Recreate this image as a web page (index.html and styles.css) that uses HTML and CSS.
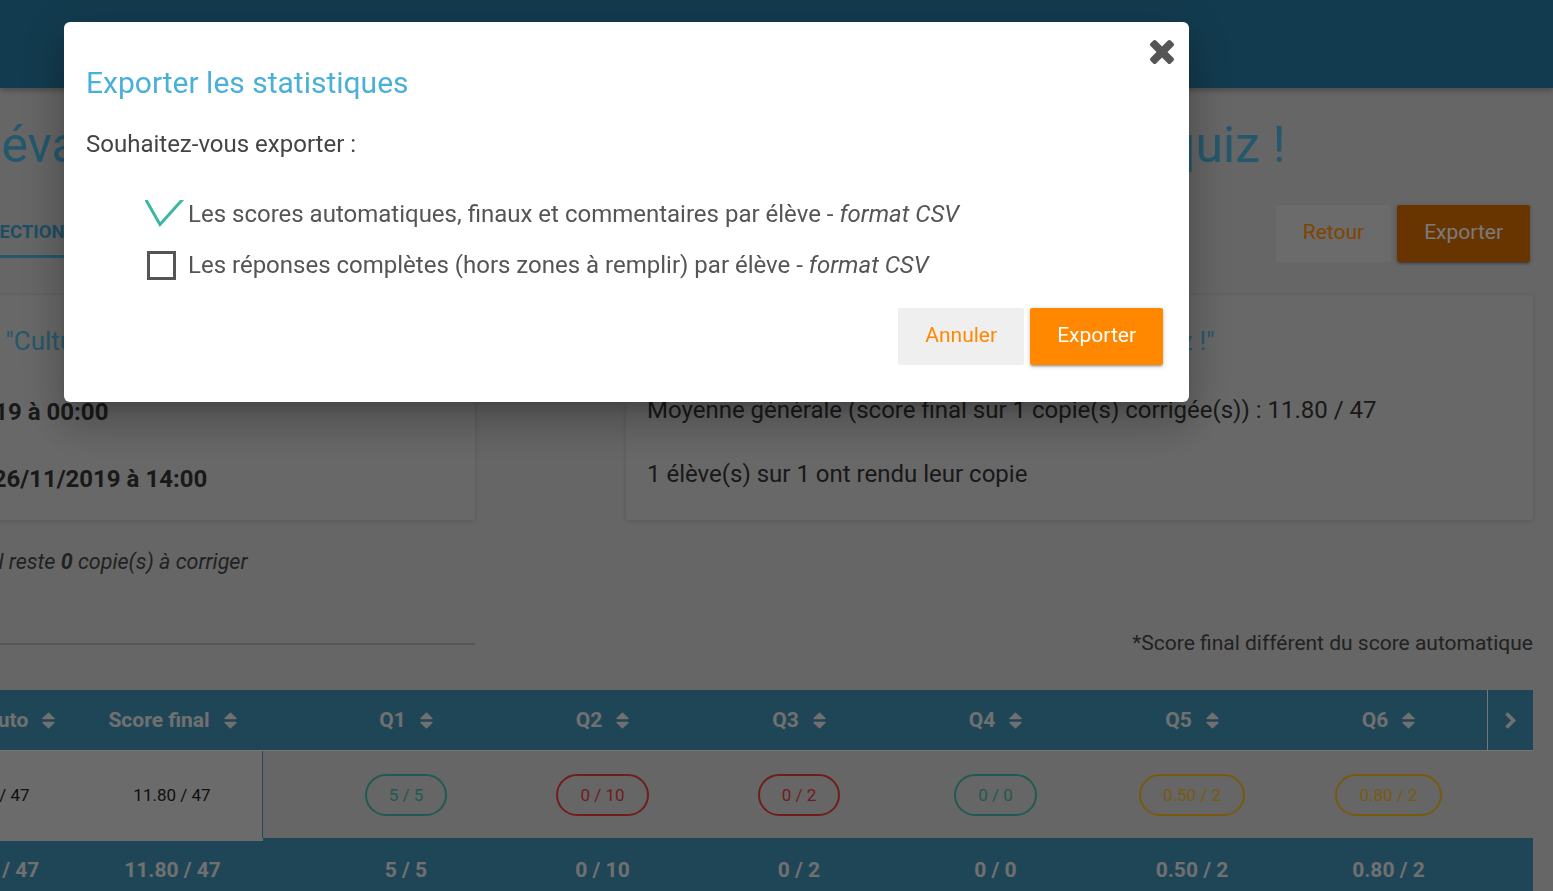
FILE: index.html
```html
<!DOCTYPE html>
<html lang="fr">
<head>
<meta charset="utf-8">
<title>Statistiques de l'évaluation</title>
<link rel="stylesheet" href="styles.css">
</head>
<body>
<header class="topbar"></header>

<main class="page">
  <h1 class="page-title">Le bilan : évaluation Culture générale et histoire : le très grand quiz !</h1>

  <div class="toolbar">
    <nav class="tabs">
      <span class="tab">Élèves</span>
      <span class="tab active">Correction</span>
    </nav>
    <div class="toolbar-actions">
      <button class="btn btn-light">Retour</button>
      <button class="btn btn-orange-dark">Exporter</button>
    </div>
  </div>

  <section class="summary">
    <div class="card card-info">
      <h2 class="card-title">Titre du devoir : "Culture générale : le grand quiz !"</h2>
      <p class="date-line">Début: <b>26/11/2019 à 00:00</b></p>
      <p class="date-line">Fin des rendus : <b>26/11/2019 à 14:00</b></p>
    </div>
    <div class="card card-stats">
      <h2 class="card-title">Statistiques de "Culture générale : le grand quiz !"</h2>
      <p class="stat-line">Moyenne générale (score final sur 1 copie(s) corrigée(s)) : 11.80 / 47</p>
      <p class="stat-line">1 élève(s) sur 1 ont rendu leur copie</p>
    </div>
    <div class="remaining">
      <p class="remaining-text">1 copie(s) rendue(s). Il reste <b>0</b> copie(s) à corriger</p>
      <hr class="divider">
    </div>
    <p class="note">*Score final différent du score automatique</p>
  </section>

  <div class="scores">
    <div class="row head">
      <div class="cell">Élève <svg class="sort" viewBox="0 0 13 17"><path d="M6.5 1.2 L12 6.6 H1 Z M1 10.4 H12 L6.5 15.8 Z"/></svg></div>
      <div class="cell">Score auto <svg class="sort" viewBox="0 0 13 17"><path d="M6.5 1.2 L12 6.6 H1 Z M1 10.4 H12 L6.5 15.8 Z"/></svg></div>
      <div class="cell">Score final <svg class="sort" viewBox="0 0 13 17"><path d="M6.5 1.2 L12 6.6 H1 Z M1 10.4 H12 L6.5 15.8 Z"/></svg></div>
      <div class="cell"></div>
      <div class="cell">Q1 <svg class="sort" viewBox="0 0 13 17"><path d="M6.5 1.2 L12 6.6 H1 Z M1 10.4 H12 L6.5 15.8 Z"/></svg></div>
      <div class="cell">Q2 <svg class="sort" viewBox="0 0 13 17"><path d="M6.5 1.2 L12 6.6 H1 Z M1 10.4 H12 L6.5 15.8 Z"/></svg></div>
      <div class="cell">Q3 <svg class="sort" viewBox="0 0 13 17"><path d="M6.5 1.2 L12 6.6 H1 Z M1 10.4 H12 L6.5 15.8 Z"/></svg></div>
      <div class="cell">Q4 <svg class="sort" viewBox="0 0 13 17"><path d="M6.5 1.2 L12 6.6 H1 Z M1 10.4 H12 L6.5 15.8 Z"/></svg></div>
      <div class="cell">Q5 <svg class="sort" viewBox="0 0 13 17"><path d="M6.5 1.2 L12 6.6 H1 Z M1 10.4 H12 L6.5 15.8 Z"/></svg></div>
      <div class="cell">Q6 <svg class="sort" viewBox="0 0 13 17"><path d="M6.5 1.2 L12 6.6 H1 Z M1 10.4 H12 L6.5 15.8 Z"/></svg></div>
      <div class="cell cell-next"><svg class="chevron" viewBox="0 0 13 19"><path d="M2.5 2.5 L9.5 9.5 L2.5 16.5"/></svg></div>
    </div>
    <div class="row body">
      <div class="cell fixed">Léa M.</div>
      <div class="cell fixed">11.80 / 47</div>
      <div class="cell fixed fixed-last">11.80 / 47</div>
      <div class="cell"></div>
      <div class="cell"><span class="badge ok">5 / 5</span></div>
      <div class="cell"><span class="badge ko">0 / 10</span></div>
      <div class="cell"><span class="badge ko">0 / 2</span></div>
      <div class="cell"><span class="badge ok">0 / 0</span></div>
      <div class="cell"><span class="badge mid">0.50 / 2</span></div>
      <div class="cell"><span class="badge mid">0.80 / 2</span></div>
      <div class="cell"></div>
    </div>
    <div class="row foot">
      <div class="cell">Moyenne</div>
      <div class="cell">11.80 / 47</div>
      <div class="cell">11.80 / 47</div>
      <div class="cell"></div>
      <div class="cell">5 / 5</div>
      <div class="cell">0 / 10</div>
      <div class="cell">0 / 2</div>
      <div class="cell">0 / 0</div>
      <div class="cell">0.50 / 2</div>
      <div class="cell">0.80 / 2</div>
      <div class="cell"></div>
    </div>
  </div>
</main>

<div class="overlay"></div>

<div class="modal" role="dialog" aria-labelledby="export-title">
  <svg class="close" viewBox="110 366 1188 1188" aria-label="Fermer"><path d="M1298 1322q0 40-28 68l-136 136q-28 28-68 28t-68-28l-294-294-294 294q-28 28-68 28t-68-28l-136-136q-28-28-28-68t28-68l294-294-294-294q-28-28-28-68t28-68l136-136q28-28 68-28t68 28l294 294 294-294q28-28 68-28t68 28l136 136q28 28 28 68t-28 68l-294 294 294 294q28 28 28 68z"/></svg>
  <h4 class="modal-title" id="export-title">Exporter les statistiques</h4>
  <p class="modal-question">Souhaitez-vous exporter :</p>
  <ul class="options">
    <li class="option">
      <span class="box"><svg class="check" viewBox="0 0 41 29"><polyline points="-0.14,-2 15,24.5 38.8,-2"/></svg></span>
      <span>Les scores automatiques, finaux et commentaires par élève - <em>format CSV</em></span>
    </li>
    <li class="option">
      <span class="box unchecked"></span>
      <span>Les réponses complètes (hors zones à remplir) par élève - <em>format CSV</em></span>
    </li>
  </ul>
  <div class="modal-actions">
    <button class="btn btn-light modal-btn">Annuler</button>
    <button class="btn btn-orange modal-btn">Exporter</button>
  </div>
</div>
</body>
</html>
```

FILE: styles.css
```css
* { box-sizing: border-box; }

html, body { margin: 0; padding: 0; }

body {
  width: 1553px;
  height: 891px;
  overflow: hidden;
  background: #cccccc;
  color: #333333;
  font-family: Roboto, "Liberation Sans", Arial, sans-serif;
}

/* ---------- page behind the modal ---------- */
.topbar {
  position: relative;
  height: 88px;
  background: #26769e;
  box-shadow: 0 2px 6px rgba(0, 0, 0, 0.3);
}

.page {
  margin: 0 20px 0 -202px;
}

.page-title {
  margin: 27px 0 0 -8px;
  font-size: 50px;
  line-height: 60px;
  font-weight: 400;
  word-spacing: 0.5px;
  color: #4ab0d8;
  white-space: nowrap;
}

.toolbar {
  margin-top: 30px;
  height: 57px;
  display: flex;
  align-items: center;
}

.tabs { display: flex; }

.tab {
  height: 49px;
  padding: 0 30px;
  line-height: 46px;
  font-size: 18px;
  font-weight: 700;
  text-transform: uppercase;
  color: #3b9cc8;
  border-bottom: 3px solid transparent;
}

.tab.active {
  padding-right: 27px;
  font-size: 18.5px;
  border-bottom-color: #4ab0d8;
}

.toolbar-actions {
  margin-left: auto;
  margin-right: 3px;
  display: flex;
  gap: 6px;
}

.btn {
  height: 57px;
  padding: 0 27px 3px;
  border: none;
  border-radius: 2px;
  font-family: inherit;
  font-size: 21px;
  cursor: pointer;
}

.btn-light { background: #d6d6d6; color: #ff8800; }

.btn-orange-dark {
  background: #d06a00;
  color: #f4f4f4;
  box-shadow: 0 2px 2px rgba(0,0,0,.14), 0 3px 1px -2px rgba(0,0,0,.12), 0 1px 5px rgba(0,0,0,.2);
}

.summary {
  margin-top: 33px;
  display: grid;
  grid-template-columns: 677px 907px;
  column-gap: 151px;
}

.card {
  background: #d0d0d0;
  border-radius: 3px;
  padding: 30px 21px 31px 21px;
  box-shadow: 0 1px 4px rgba(0, 0, 0, 0.14);
}

.card-info { padding-bottom: 26px; }

.card-title {
  margin: 0 0 38px;
  font-size: 26px;
  line-height: 32px;
  font-weight: 400;
  word-spacing: 0.5px;
  color: #4ab0d8;
  white-space: nowrap;
}

.card-info .card-title { margin-bottom: 40px; }

.date-line {
  margin: 0 0 37px;
  font-size: 24px;
  line-height: 30px;
  color: #333;
  white-space: nowrap;
}

.date-line:last-child { margin-bottom: 0; }

.stat-line {
  margin: 0 0 34px;
  font-size: 24px;
  line-height: 30px;
  color: #333;
}

.stat-line:last-child { margin-bottom: 0; }

.remaining-text {
  margin: 28px 0 0 -3px;
  font-size: 21.5px;
  line-height: 28px;
  font-style: italic;
  color: #444;
  white-space: nowrap;
}

.divider {
  margin: 67px 0 0;
  height: 2px;
  border: 0;
  background: #aaaaaa;
}

.note {
  margin: 109px 0 0;
  font-size: 21px;
  line-height: 28px;
  text-align: right;
  color: #444;
}

/* ---------- scores table ---------- */
.scores {
  margin-top: 33px;
  display: grid;
  grid-template-columns: 102px 182px 181px 44.75px repeat(6, 196.5px) 46px;
}

.row { display: contents; }

.cell {
  display: flex;
  align-items: center;
  justify-content: center;
  white-space: nowrap;
  overflow: hidden;
}

.head .cell {
  height: 61px;
  gap: 14px;
  background: #3e8cae;
  border-bottom: 1px solid #eeeeee;
  color: #e0e0e0;
  font-size: 21px;
  font-weight: 700;
}

.sort {
  width: 13px;
  height: 17px;
  fill: currentColor;
  stroke: currentColor;
  stroke-width: 1.4;
  stroke-linejoin: round;
  flex: none;
}

.cell-next { border-left: 1px solid #eeeeee; }

.chevron {
  width: 13px;
  height: 19px;
  fill: none;
  stroke: #e0e0e0;
  stroke-width: 3.6;
}

.body .cell {
  height: 87px;
  font-size: 17px;
  color: #222;
}

.body .fixed {
  position: relative;
  z-index: 1;
  background: #d6d6d6;
  box-shadow: 0 3px 0 #d6d6d6;
}

.body .fixed-last { border-right: 1px solid #3e94b4; }

.badge {
  display: inline-flex;
  align-items: center;
  height: 42px;
  padding: 0 22px;
  border: 2px solid currentColor;
  border-radius: 21px;
  font-size: 17px;
}

.badge.ok { color: #40b4a2; }
.badge.ko { color: #e03a3a; }
.badge.mid { color: #eeb41c; }

.foot .cell {
  height: 64px;
  background: #3e8cae;
  color: #e0e0e0;
  font-size: 21px;
  font-weight: 700;
}

/* ---------- modal ---------- */
.overlay {
  position: fixed;
  inset: 0;
  z-index: 10;
  background: rgba(0, 0, 0, 0.5);
}

.modal {
  position: fixed;
  z-index: 11;
  top: 22px;
  left: 64px;
  width: 1125px;
  padding: 24px 26px 37px 22px;
  background: #ffffff;
  border-radius: 6px;
  box-shadow: 0 24px 38px 3px rgba(0,0,0,.14), 0 9px 46px 8px rgba(0,0,0,.12), 0 11px 15px -7px rgba(0,0,0,.2);
}

.close {
  position: absolute;
  top: 18px;
  right: 15px;
  width: 24px;
  height: 24px;
  fill: #555555;
}

.modal-title {
  margin: 19px 0 0;
  font-size: 30px;
  line-height: 36px;
  font-weight: 400;
  color: #4ab0d8;
}

.modal-question {
  margin: 28px 0 0;
  font-size: 24px;
  line-height: 30px;
  color: #444444;
}

.options {
  margin: 40px 0 0;
  padding: 0 0 0 61px;
  list-style: none;
  display: flex;
  flex-direction: column;
  gap: 21px;
}

.option {
  display: flex;
  align-items: center;
  gap: 12px;
  height: 30px;
  font-size: 24px;
  line-height: 30px;
  color: #555555;
}

.box {
  position: relative;
  flex: none;
  width: 29px;
  height: 29px;
}

.box.unchecked { border: 3px solid #555555; }

.check {
  position: absolute;
  left: -2px;
  top: 0;
  width: 41px;
  height: 29px;
  overflow: hidden;
  fill: none;
  stroke: #3ab8a4;
  stroke-width: 3;
}

.modal-actions {
  margin-top: 28px;
  display: flex;
  justify-content: flex-end;
  gap: 6px;
}

.btn-orange {
  background: #ff8800;
  color: #ffffff;
  box-shadow: 0 2px 2px rgba(0,0,0,.14), 0 3px 1px -2px rgba(0,0,0,.12), 0 1px 5px rgba(0,0,0,.2);
}

.modal-btn.btn-light { background: #efefef; }
```
